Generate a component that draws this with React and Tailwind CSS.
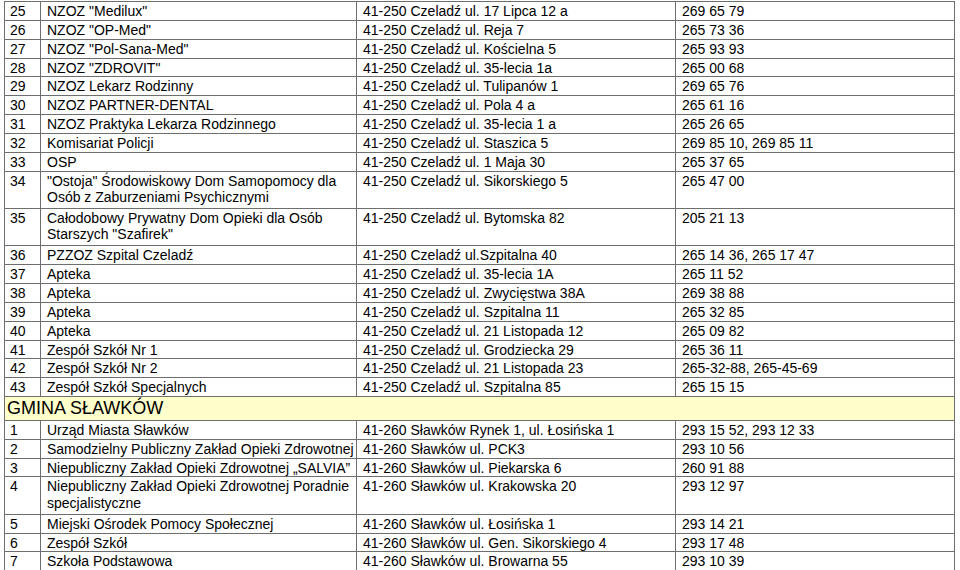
import React from 'react';

const czeladz = [
    ['25', 'NZOZ "Medilux"', '41-250 Czeladź ul. 17 Lipca 12 a', '269 65 79'],
    ['26', 'NZOZ "OP-Med"', '41-250 Czeladź ul. Reja 7', '265 73 36'],
    ['27', 'NZOZ "Pol-Sana-Med"', '41-250 Czeladź ul. Kościelna 5', '265 93 93'],
    ['28', 'NZOZ "ZDROVIT"', '41-250 Czeladź ul. 35-lecia 1a', '265 00 68'],
    ['29', 'NZOZ Lekarz Rodzinny', '41-250 Czeladź ul. Tulipanów 1', '269 65 76'],
    ['30', 'NZOZ PARTNER-DENTAL', '41-250 Czeladź ul. Pola 4 a', '265 61 16'],
    ['31', 'NZOZ Praktyka Lekarza Rodzinnego', '41-250 Czeladź ul. 35-lecia 1 a', '265 26 65'],
    ['32', 'Komisariat Policji', '41-250 Czeladź ul. Staszica 5', '269 85 10, 269 85 11'],
    ['33', 'OSP', '41-250 Czeladź ul. 1 Maja 30', '265 37 65'],
    ['34', ['"Ostoja" Środowiskowy Dom Samopomocy dla', 'Osób z Zaburzeniami Psychicznymi'], '41-250 Czeladź ul. Sikorskiego 5', '265 47 00'],
    ['35', ['Całodobowy Prywatny Dom Opieki dla Osób', 'Starszych "Szafirek"'], '41-250 Czeladź ul. Bytomska 82', '205 21 13'],
    ['36', 'PZZOZ Szpital Czeladź', '41-250 Czeladź ul.Szpitalna 40', '265 14 36, 265 17 47'],
    ['37', 'Apteka', '41-250 Czeladź ul. 35-lecia 1A', '265 11 52'],
    ['38', 'Apteka', '41-250 Czeladź ul. Zwycięstwa 38A', '269 38 88'],
    ['39', 'Apteka', '41-250 Czeladź ul. Szpitalna 11', '265 32 85'],
    ['40', 'Apteka', '41-250 Czeladź ul. 21 Listopada 12', '265 09 82'],
    ['41', 'Zespół Szkół Nr 1', '41-250 Czeladź ul. Grodziecka 29', '265 36 11'],
    ['42', 'Zespół Szkół Nr 2', '41-250 Czeladź ul. 21 Listopada 23', '265-32-88, 265-45-69'],
    ['43', 'Zespół Szkół Specjalnych', '41-250 Czeladź ul. Szpitalna 85', '265 15 15'],
];

const slawkow = [
    ['1', 'Urząd Miasta Sławków', '41-260 Sławków Rynek 1, ul. Łosińska 1', '293 15 52, 293 12 33'],
    ['2', 'Samodzielny Publiczny Zakład Opieki Zdrowotnej', '41-260 Sławków ul. PCK3', '293 10 56'],
    ['3', 'Niepubliczny Zakład Opieki Zdrowotnej „SALVIA”', '41-260 Sławków ul. Piekarska 6', '260 91 88'],
    ['4', ['Niepubliczny Zakład Opieki Zdrowotnej Poradnie', 'specjalistyczne'], '41-260 Sławków ul. Krakowska 20', '293 12 97'],
    ['5', 'Miejski Ośrodek Pomocy Społecznej', '41-260 Sławków ul. Łosińska 1', '293 14 21'],
    ['6', 'Zespół Szkół', '41-260 Sławków ul. Gen. Sikorskiego 4', '293 17 48'],
    ['7', 'Szkoła Podstawowa', '41-260 Sławków ul. Browarna 55', '293 10 39'],
];

function Cell({ children, pad = 'pl-[6px]' }) {
    return (
        <div className={`overflow-hidden whitespace-nowrap border-l border-[#6e6e6e] pt-[1px] ${pad}`}>
            {children}
        </div>
    );
}

function Row({ row }) {
    const [nr, name, address, phone] = row;
    const lines = Array.isArray(name) ? name : [name];
    const height = lines.length > 1 ? 'h-[37.4px]' : 'h-[18.85px]';

    return (
        <div className={`grid grid-cols-[36px_316px_319px_1fr] border-b border-[#6e6e6e] ${height}`}>
            <Cell pad="pl-[5px]">{nr}</Cell>
            <Cell>
                {lines.map((line) => (
                    <div key={line}>{line}</div>
                ))}
            </Cell>
            <Cell>{address}</Cell>
            <Cell>{phone}</Cell>
        </div>
    );
}

export default function App() {
    return (
        <div className="h-[570px] w-[960px] overflow-hidden bg-white">
            <div
                className="ml-[4px] mt-[1px] w-[951px] border-r border-t border-[#6e6e6e] text-[14px] leading-[16.5px] text-black"
                style={{ fontFamily: '"Liberation Sans", Arial, sans-serif' }}
            >
                {czeladz.map((row) => (
                    <Row key={row[0]} row={row} />
                ))}

                <div className="flex h-[23.7px] items-center border-b border-l border-[#6e6e6e] bg-[#ffffcc] pl-[2px] text-[18px] leading-[20px]">
                    GMINA SŁAWKÓW
                </div>

                {slawkow.map((row) => (
                    <Row key={row[0]} row={row} />
                ))}
            </div>
        </div>
    );
}
